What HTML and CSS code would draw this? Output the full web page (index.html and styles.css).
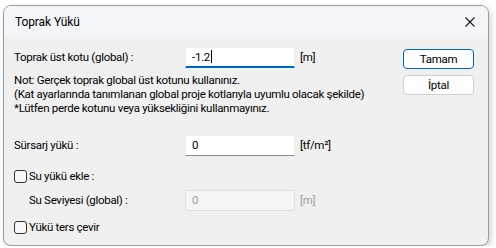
FILE: index.html
```html
<!DOCTYPE html>
<html lang="tr">
<head>
  <meta charset="UTF-8">
  <meta name="viewport" content="width=device-width, initial-scale=1.0">
  <title>Toprak Yükü</title>
  <link rel="stylesheet" href="styles.css">
</head>
<body>
  <div class="window">
    <div class="titlebar">
      <span class="title">Toprak Yükü</span>
      <svg class="close" width="10" height="10" viewBox="0 0 10 10">
        <path d="M0.5 0.5 L9.5 9.5 M9.5 0.5 L0.5 9.5" stroke="#1a1a1a" stroke-width="1.1" fill="none"/>
      </svg>
    </div>
    <div class="content">
      <div class="form">
        <div class="row first">
          <label class="label">Toprak üst kotu (global) :</label>
          <div class="input active">-1.2<span class="caret"></span></div>
          <span class="unit">[m]</span>
        </div>
        <div class="note">
          <p>Not: Gerçek toprak global üst kotunu kullanınız.</p>
          <p>(Kat ayarlarında tanımlanan global proje kotlarıyla uyumlu olacak şekilde)</p>
          <p>*Lütfen perde kotunu veya yüksekliğini kullanmayınız.</p>
        </div>
        <div class="row surcharge">
          <label class="label">Sürsarj yükü :</label>
          <div class="input">0</div>
          <span class="unit">[tf/m²]</span>
        </div>
        <div class="check water">
          <span class="box"></span>
          <span>Su yükü ekle :</span>
        </div>
        <div class="row level">
          <label class="label indent">Su Seviyesi (global) :</label>
          <div class="input disabled">0</div>
          <span class="unit disabled-text">[m]</span>
        </div>
        <div class="check reverse">
          <span class="box"></span>
          <span>Yükü ters çevir</span>
        </div>
      </div>
      <div class="buttons">
        <button class="btn default">Tamam</button>
        <button class="btn">İptal</button>
      </div>
    </div>
  </div>
</body>
</html>
```

FILE: styles.css
```css
body {
  margin: 0;
  background-color: #ffffff;
  font-family: Roboto, "Noto Sans", sans-serif;
  font-size: 11.5px;
  letter-spacing: -0.3px;
  color: #000000;
}

.window {
  margin: 5px 0 0 3px;
  width: 484px;
  height: 239px;
  border: 1px solid #9c9c9c;
  border-radius: 8px;
  background-color: #f0f0f0;
  box-shadow: 2px 3px 6px rgba(0, 0, 0, 0.18);
  overflow: hidden;
}

.titlebar {
  height: 31px;
  display: flex;
  align-items: center;
  justify-content: space-between;
  padding: 0 13px 0 11px;
  background-color: #f3f5f9;
}

.title {
  font-size: 12px;
  letter-spacing: -0.1px;
}

.close {
  display: block;
}

.content {
  display: flex;
  justify-content: space-between;
  padding: 9px 14px 0 10px;
}

.form {
  white-space: nowrap;
}

.row {
  display: flex;
  align-items: center;
  height: 22px;
}

.label {
  width: 171px;
}

.label.indent {
  padding-left: 15px;
  width: 156px;
}

.input {
  box-sizing: border-box;
  width: 110px;
  height: 21px;
  padding: 0 6px;
  line-height: 19px;
  background-color: #ffffff;
  border: 1px solid #ececec;
  border-bottom-color: #868686;
  border-radius: 3px 3px 0 0;
}

.input.active {
  border-bottom: 2px solid #0067c0;
}

.caret {
  display: inline-block;
  width: 1px;
  height: 13px;
  margin-left: 1px;
  vertical-align: -2px;
  background-color: #000000;
}

.input.disabled {
  background-color: #f5f5f5;
  border: 1px solid #e0e0e0;
  border-radius: 3px;
  color: #9d9d9d;
}

.unit {
  margin-left: 5px;
}

.disabled-text {
  color: #9d9d9d;
}

.note {
  margin-top: 5px;
}

.note p {
  margin: 0;
  line-height: 14px;
}

.surcharge {
  margin-top: 19px;
}

.check {
  display: flex;
  align-items: center;
  gap: 2px;
  height: 16px;
}

.water {
  margin-top: 12px;
}

.level {
  margin-top: 5px;
}

.reverse {
  margin-top: 8px;
}

.box {
  box-sizing: border-box;
  width: 13px;
  height: 13px;
  border: 1px solid #333333;
  border-radius: 3px;
  background-color: #f7f7f7;
}

.buttons {
  display: flex;
  flex-direction: column;
  gap: 6px;
  padding-top: 3px;
}

.btn {
  box-sizing: border-box;
  width: 71px;
  height: 20px;
  padding: 0;
  font-family: inherit;
  font-size: 11.5px;
  letter-spacing: -0.25px;
  color: #000000;
  background-color: #fdfdfd;
  border: 1px solid #d0d0d0;
  border-radius: 4px;
}

.btn.default {
  border-color: #0067c0;
}
```
